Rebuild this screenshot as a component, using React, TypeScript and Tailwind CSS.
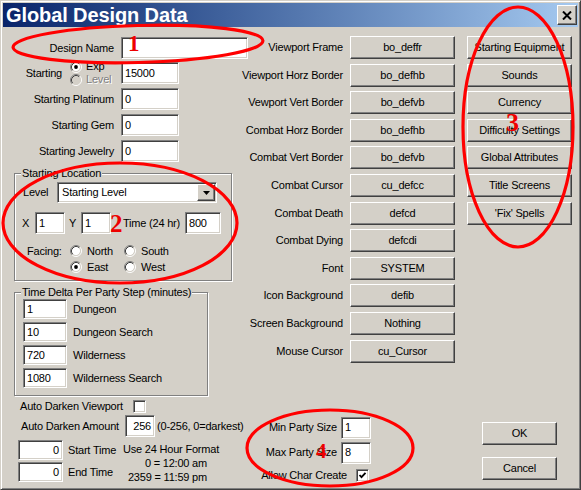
import type { ReactNode } from "react";

const raised =
  "border border-t-white border-l-white border-r-[#404040] border-b-[#404040] shadow-[inset_-1px_-1px_0_#808080] bg-[#d4d0c8]";
const sunken =
  "border border-t-[#808080] border-l-[#808080] border-b-white border-r-white shadow-[inset_1px_1px_0_#404040,inset_-1px_-1px_0_#d4d0c8] bg-white";

function Btn({ children, className = "" }: { children: ReactNode; className?: string }) {
  return (
    <div className={`${raised} flex shrink-0 items-center justify-center whitespace-nowrap ${className}`}>
      {children}
    </div>
  );
}

function Field({ value, className = "", right }: { value: string; className?: string; right?: boolean }) {
  return (
    <div
      className={`${sunken} flex shrink-0 items-center whitespace-nowrap ${right ? "justify-end pr-[3px]" : "pl-[3px]"} ${className}`}
    >
      {value}
    </div>
  );
}

function Radio({ checked, disabled }: { checked?: boolean; disabled?: boolean }) {
  return (
    <svg width="12" height="12" viewBox="0 0 12 12" className="shrink-0">
      <circle cx="6" cy="6" r="4.2" fill={disabled ? "#d4d0c8" : "#fff"} />
      <path d="M2.11 9.89 A5.5 5.5 0 0 1 9.89 2.11" fill="none" stroke="#808080" />
      <path d="M9.89 2.11 A5.5 5.5 0 0 1 2.11 9.89" fill="none" stroke="#fff" />
      <path d="M2.82 9.18 A4.5 4.5 0 0 1 9.18 2.82" fill="none" stroke="#404040" />
      <path d="M9.18 2.82 A4.5 4.5 0 0 1 2.82 9.18" fill="none" stroke="#d4d0c8" />
      {checked && <circle cx="6" cy="6" r="1.9" fill="#000" />}
    </svg>
  );
}

function Check({ checked }: { checked?: boolean }) {
  return (
    <div className={`${sunken} h-[13px] w-[13px] shrink-0`}>
      {checked && (
        <svg width="11" height="11" viewBox="0 0 11 11">
          <path d="M2.5 5 L4.5 7.2 L8.5 2.8" fill="none" stroke="#000" strokeWidth="1.8" />
        </svg>
      )}
    </div>
  );
}

function GroupBox({ title, className = "", children }: { title: string; className?: string; children: ReactNode }) {
  return (
    <div className={`relative shrink-0 border border-[#808080] shadow-[inset_1px_1px_0_#fff,1px_1px_0_#fff] ${className}`}>
      <span className="absolute -top-[7px] left-[6px] bg-[#d4d0c8] px-[1px] whitespace-nowrap">{title}</span>
      {children}
    </div>
  );
}

function LabelBox({ children, className = "" }: { children: ReactNode; className?: string }) {
  return <div className={`flex shrink-0 justify-end whitespace-nowrap ${className}`}>{children}</div>;
}

const midRows = [
  ["Viewport Frame", "bo_deffr"],
  ["Viewport Horz Border", "bo_defhb"],
  ["Vewport Vert Border", "bo_defvb"],
  ["Combat Horz Border", "bo_defhb"],
  ["Combat Vert Border", "bo_defvb"],
  ["Combat Cursor", "cu_defcc"],
  ["Combat Death", "defcd"],
  ["Combat Dying", "defcdi"],
  ["Font", "SYSTEM"],
  ["Icon Background", "defib"],
  ["Screen Background", "Nothing"],
  ["Mouse Cursor", "cu_Cursor"],
];

const rightButtons = [
  "Starting Equipment",
  "Sounds",
  "Currency",
  "Difficulty Settings",
  "Global Attributes",
  "Title Screens",
  "'Fix' Spells",
];

const timeDelta = [
  ["1", "Dungeon"],
  ["10", "Dungeon Search"],
  ["720", "Wilderness"],
  ["1080", "Wilderness Search"],
];

export default function App() {
  return (
    <div className="relative h-[490px] w-[581px] overflow-hidden bg-[#d4d0c8] font-['Liberation_Sans',Arial,sans-serif] text-[11px] leading-[13px] tracking-[-0.2px] text-black">
      {/* Window frame */}
      <div className="flex h-[490px] w-[581px] flex-col border border-t-[#d4d0c8] border-l-[#d4d0c8] border-r-[#404040] border-b-[#404040] p-[2px] shadow-[inset_1px_1px_0_#fff,inset_-1px_-1px_0_#808080]">
        {/* Title bar */}
        <div className="flex h-[24px] shrink-0 items-center bg-gradient-to-r from-[#0a246a] to-[#a6caf0] pl-[3px] pr-[1px]">
          <span className="text-[20px] leading-[24px] font-bold tracking-[-0.1px] text-white">Global Design Data</span>
          <div className={`${raised} ml-auto flex h-[20px] w-[20px] items-center justify-center`}>
            <svg width="10" height="9" viewBox="0 0 10 9">
              <path d="M1 0.5 L9 8.5 M9 0.5 L1 8.5" stroke="#000" strokeWidth="2" />
            </svg>
          </div>
        </div>

        {/* Body */}
        <div className="flex flex-1">
          {/* Left column */}
          <div className="flex w-[247px] shrink-0 flex-col">
            <div className="mt-[10px] flex h-[22px] items-center">
              <LabelBox className="w-[111px]">Design Name</LabelBox>
              <Field value="" className="ml-[7px] h-[22px] w-[127px]" />
            </div>

            <div className="mt-[3px] flex h-[22px] items-center">
              <LabelBox className="w-[59px]">Starting</LabelBox>
              <div className="ml-[8px] flex w-[51px] flex-col">
                <div className="flex h-[13px] items-center gap-[4px]">
                  <Radio checked />
                  <span>Exp</span>
                </div>
                <div className="flex h-[13px] items-center gap-[4px]">
                  <Radio disabled />
                  <span className="text-[#808080] [text-shadow:1px_1px_0_#fff]">Level</span>
                </div>
              </div>
              <Field value="15000" className="h-[22px] w-[58px]" />
            </div>

            {[
              ["Starting Platinum", "0"],
              ["Starting Gem", "0"],
              ["Starting Jewelry", "0"],
            ].map(([label, v]) => (
              <div key={label} className="mt-[4px] flex h-[22px] items-center">
                <LabelBox className="w-[111px]">{label}</LabelBox>
                <Field value={v} className="ml-[7px] h-[22px] w-[58px]" />
              </div>
            ))}

            <GroupBox title="Starting Location" className="mt-[11px] ml-[11px] h-[108px] w-[218px]">
              <div className="mt-[8px] flex h-[21px] items-center">
                <span className="ml-[8px] w-[34px]">Level</span>
                <div className={`${sunken} flex h-[21px] w-[160px] items-center justify-between pl-[4px] pr-[1px]`}>
                  <span>Starting Level</span>
                  <div className={`${raised} flex h-[17px] w-[18px] items-center justify-center`}>
                    <svg width="7" height="4" viewBox="0 0 7 4">
                      <path d="M0 0 H7 L3.5 4 Z" fill="#000" />
                    </svg>
                  </div>
                </div>
              </div>
              <div className="mt-[9px] flex h-[22px] items-center">
                <span className="ml-[7px] w-[13px]">X</span>
                <Field value="1" className="h-[22px] w-[30px]" />
                <span className="w-[16px] pl-[4px]">Y</span>
                <Field value="1" className="h-[22px] w-[30px]" />
                <LabelBox className="w-[74px] pr-[5px]">Time (24 hr)</LabelBox>
                <Field value="800" className="h-[22px] w-[36px]" />
              </div>
              <div className="mt-[9px] ml-[12px] grid grid-cols-[43px_54px_60px] grid-rows-[16px_16px] items-center">
                <span>Facing:</span>
                <div className="flex items-center gap-[5px]">
                  <Radio />
                  <span>North</span>
                </div>
                <div className="flex items-center gap-[5px]">
                  <Radio />
                  <span>South</span>
                </div>
                <span />
                <div className="flex items-center gap-[5px]">
                  <Radio checked />
                  <span>East</span>
                </div>
                <div className="flex items-center gap-[5px]">
                  <Radio />
                  <span>West</span>
                </div>
              </div>
            </GroupBox>

            <GroupBox title="Time Delta Per Party Step (minutes)" className="mt-[11px] ml-[11px] h-[104px] w-[194px]">
              <div className="mt-[6px] ml-[8px] flex flex-col gap-[3px]">
                {timeDelta.map(([v, label]) => (
                  <div key={label} className="flex h-[20px] items-center">
                    <Field value={v} className="h-[20px] w-[44px]" />
                    <span className="ml-[6px] whitespace-nowrap">{label}</span>
                  </div>
                ))}
              </div>
            </GroupBox>

            <div className="mt-[4px] flex h-[13px] items-center">
              <span className="ml-[17px] w-[113px] whitespace-nowrap">Auto Darken Viewport</span>
              <Check />
            </div>
            <div className="mt-[2px] flex h-[22px] items-center">
              <span className="ml-[18px] w-[104px] whitespace-nowrap">Auto Darken Amount</span>
              <Field value="256" right className="h-[22px] w-[30px]" />
              <span className="ml-[2px] whitespace-nowrap">(0-256, 0=darkest)</span>
            </div>
            <div className="mt-[3px] flex">
              <div className="ml-[15px] flex w-[105px] flex-col gap-[2px]">
                {["Start Time", "End Time"].map((label) => (
                  <div key={label} className="flex h-[20px] items-center">
                    <Field value="0" right className="h-[20px] w-[45px]" />
                    <span className="ml-[5px] whitespace-nowrap">{label}</span>
                  </div>
                ))}
              </div>
              <div className="flex w-[96px] flex-col pt-[2px] leading-[14px]">
                <span className="whitespace-nowrap">Use 24 Hour Format</span>
                <span className="self-end pr-[12px] whitespace-nowrap">0 = 12:00 am</span>
                <span className="self-end pr-[12px] whitespace-nowrap">2359 = 11:59 pm</span>
              </div>
            </div>
          </div>

          {/* Middle column */}
          <div className="flex w-[205px] shrink-0 flex-col">
            <div className="mt-[9px] flex flex-col gap-[4.6px]">
              {midRows.map(([label, value]) => (
                <div key={label} className="flex h-[23px] items-center">
                  <LabelBox className="w-[93px]">{label}</LabelBox>
                  <Btn className="ml-[7px] h-[23px] w-[105px]">{value}</Btn>
                </div>
              ))}
            </div>
            <div className="mt-[54px] flex h-[22px] items-center">
              <LabelBox className="w-[87px]">Min Party Size</LabelBox>
              <Field value="1" className="ml-[4px] h-[22px] w-[30px]" />
            </div>
            <div className="mt-[3px] flex h-[22px] items-center">
              <LabelBox className="w-[87px]">Max Party Size</LabelBox>
              <Field value="8" className="ml-[4px] h-[22px] w-[30px]" />
            </div>
            <div className="mt-[5px] flex h-[13px] items-center">
              <LabelBox className="w-[97px]">Allow Char Create</LabelBox>
              <div className="ml-[9px]">
                <Check checked />
              </div>
            </div>
          </div>

          {/* Right column */}
          <div className="flex flex-1 flex-col">
            <div className="mt-[9px] ml-[12px] flex flex-col gap-[4.6px]">
              {rightButtons.map((b) => (
                <Btn key={b} className="h-[23px] w-[105px]">
                  {b}
                </Btn>
              ))}
            </div>
            <Btn className="mt-[197px] ml-[27px] h-[23px] w-[75px]">OK</Btn>
            <Btn className="mt-[12px] ml-[27px] h-[23px] w-[75px]">Cancel</Btn>
          </div>
        </div>
      </div>

      {/* Red annotations drawn over the dialog */}
      <svg
        className="pointer-events-none absolute inset-0"
        width="581"
        height="490"
        viewBox="0 0 581 490"
        fontFamily="'Liberation Serif', 'Times New Roman', serif"
        fontWeight="bold"
      >
        <g fill="none" stroke="#ff0000" strokeWidth="3.2">
          <ellipse cx="138" cy="44" rx="125" ry="18.5" transform="rotate(-1.5 138 44)" />
          <ellipse cx="120" cy="223" rx="117" ry="60" />
          <ellipse cx="518" cy="127" rx="55" ry="120" />
          <ellipse cx="330" cy="448" rx="83" ry="38" />
        </g>
        <g fill="#ee0000">
          <text x="128" y="51" fontSize="23">1</text>
          <text x="110" y="232" fontSize="25">2</text>
          <text x="506" y="131" fontSize="26">3</text>
          <text x="316" y="458" fontSize="21">4</text>
        </g>
      </svg>
    </div>
  );
}
